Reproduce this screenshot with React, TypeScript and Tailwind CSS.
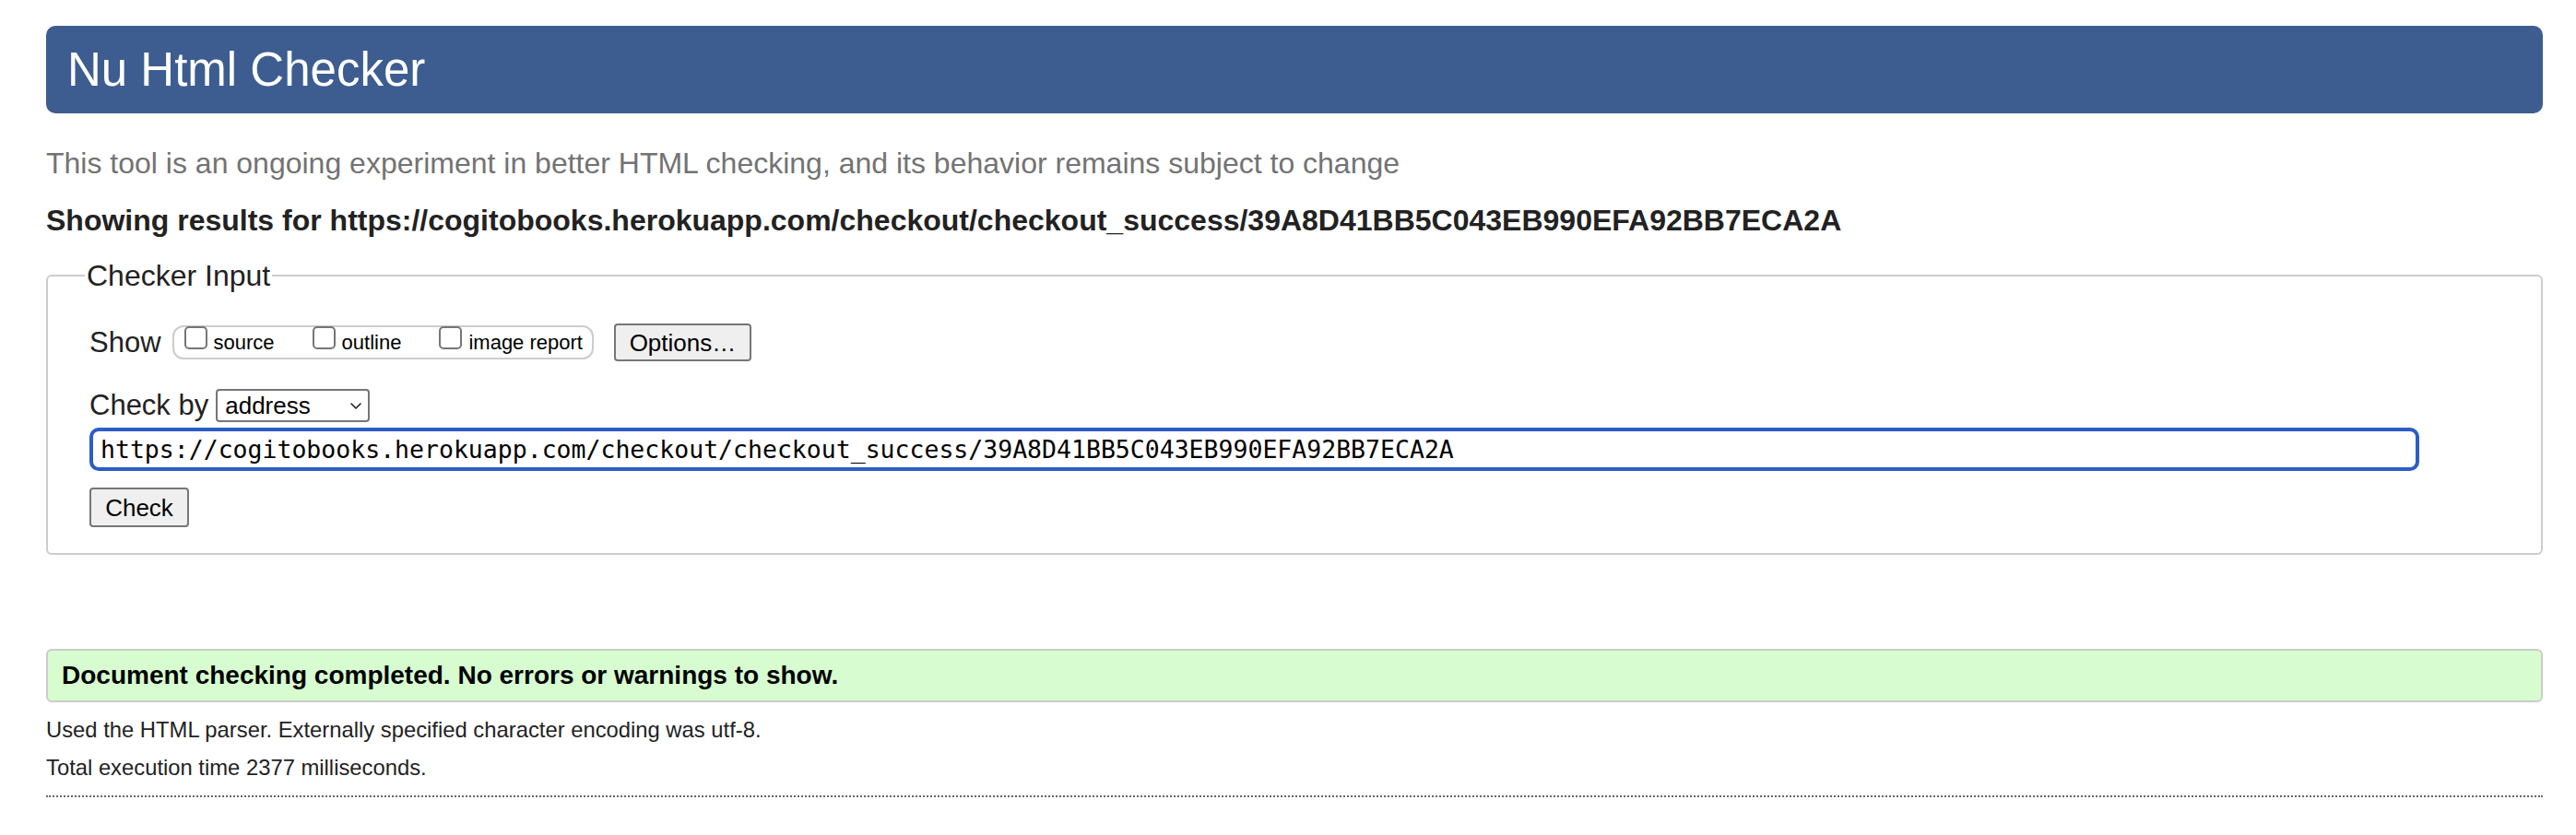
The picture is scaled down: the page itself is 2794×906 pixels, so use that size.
import React from 'react'

const URL = 'https://cogitobooks.herokuapp.com/checkout/checkout_success/39A8D41BB5C043EB990EFA92BB7ECA2A'

function Box({ label, first }: { label: string; first?: boolean }) {
  return (
    <span className={`flex items-baseline ${first ? '' : 'ml-[41px]'}`}>
      <span className="-mt-px inline-block h-[25px] w-[25px] rounded-[5px] border-2 border-[#767676] bg-white" />
      <span className="ml-[7px] text-[22px] leading-[22px] text-black">{label}</span>
    </span>
  )
}

export default function App() {
  return (
    <div className="min-h-screen bg-white pl-[50px] pr-[36px] font-['Liberation_Sans',Arial,sans-serif]">
      <header className="mt-[28px] flex h-[95px] items-center rounded-[10px] bg-[#3d5d90] pl-[23px]">
        <h1 className="text-[51px] leading-[95px] text-white">Nu Html Checker</h1>
      </header>

      <p className="mt-[37px] text-[32px] leading-[34px] text-[#737373]">
        This tool is an ongoing experiment in better HTML checking, and its behavior remains subject to change
      </p>
      <p className="mt-[28px] text-[32px] font-bold leading-[34px] text-[#222]">Showing results for {URL}</p>

      <fieldset className="mt-[25px] rounded-[6px] border-2 border-[#cccccc] pb-[28px] pl-[45px] pt-[34px]">
        <legend className="-ml-[5px] px-[2px] text-[32px] leading-[36px] text-[#222]">Checker Input</legend>

        <div className="flex h-[41px] items-center">
          <span className="text-[31px] leading-[34px] text-[#222]">Show</span>
          <div className="ml-[12px] flex h-[37px] items-baseline rounded-[12px] border-2 border-[#cccccc] pl-[11px] pr-[10px]">
            <Box label="source" first />
            <Box label="outline" />
            <Box label="image report" />
          </div>
          <button className="ml-[22px] flex h-[41px] w-[149px] items-center justify-center rounded-[4px] border-2 border-[#767676] bg-[#efefef] text-[26px] leading-[30px] text-black">
            Options…
          </button>
        </div>

        <div className="mt-[30px] flex h-[36px] items-center">
          <span className="text-[31px] leading-[34px] text-[#222]">Check by</span>
          <div className="ml-[8px] flex h-[36px] w-[167px] items-center justify-between rounded-[4px] border-2 border-[#767676] bg-white pl-[8px] pr-[6px]">
            <span className="text-[26px] leading-[30px] text-black">address</span>
            <svg width="14" height="10" viewBox="0 0 14 10" fill="none" stroke="#222" strokeWidth="1.6">
              <path d="M2 3l5 5 5-5" strokeLinecap="round" strokeLinejoin="round" />
            </svg>
          </div>
        </div>

        <div className="mt-[6px] flex h-[47px] w-[2527px] items-center rounded-[10px] border-4 border-[#2b5dc6] bg-white pl-[8px]">
          <span className="font-['DejaVu_Sans_Mono',monospace] text-[26.5px] leading-[30px] text-black">{URL}</span>
        </div>

        <button className="mt-[18px] flex h-[43px] w-[108px] items-center justify-center rounded-[4px] border-2 border-[#767676] bg-[#efefef] text-[26px] leading-[30px] text-black">
          Check
        </button>
      </fieldset>

      <div className="mt-[102px] flex h-[58px] items-center rounded-[6px] border-2 border-[#cccccc] bg-[#d6fcd0] pl-[15px]">
        <p className="text-[28px] font-bold leading-[54px] text-black">
          Document checking completed. No errors or warnings to show.
        </p>
      </div>

      <p className="mt-[9px] text-[23.8px] leading-[41px] text-[#222]">
        Used the HTML parser. Externally specified character encoding was utf-8.
      </p>
      <p className="text-[23.8px] leading-[41px] text-[#222]">Total execution time 2377 milliseconds.</p>
      <div className="mt-[10px] border-t-2 border-dotted border-[#666]" />
    </div>
  )
}
